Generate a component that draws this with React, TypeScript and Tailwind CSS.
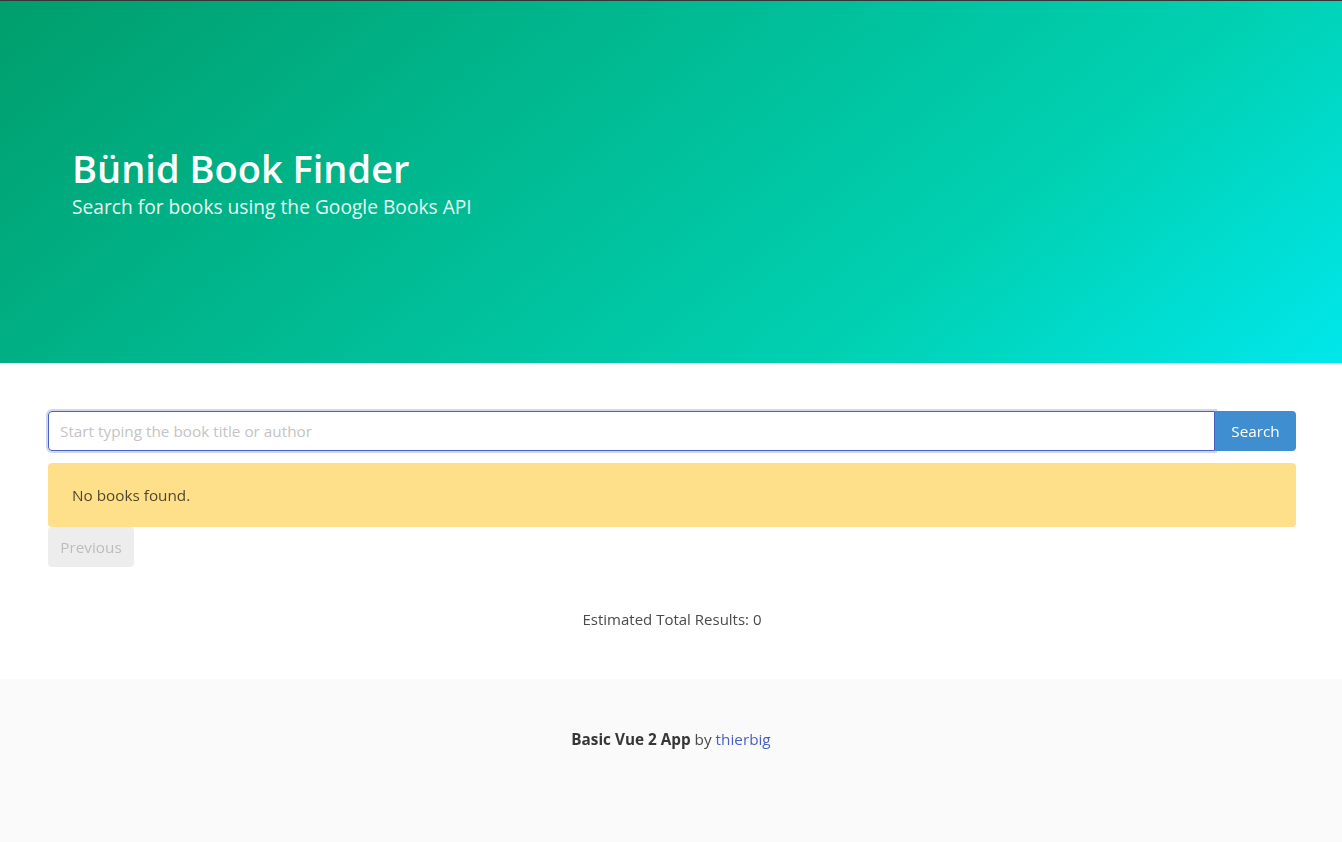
export default function App() {
  return (
    <div className="min-h-screen bg-white text-[#4a4a4a] text-base" style={{ fontFamily: '"Open Sans", "Noto Sans", sans-serif' }}>
      <section className="border-t border-[#363636] bg-[linear-gradient(141deg,#009e6c_0%,#00d1b2_71%,#00e7eb_100%)]">
        <div className="h-[362px] flex items-center px-[72px]">
          <div className="pt-[2px]">
            <h1 className="text-[38px] leading-[42px] font-semibold text-white">Bünid Book Finder</h1>
            <h2 className="mt-[6px] text-[19.2px] leading-6 text-white/90">Search for books using the Google Books API</h2>
          </div>
        </div>
      </section>

      <section className="pl-12 pr-[46px] py-12">
        <div className="flex">
          <input
            autoFocus
            className="flex-1 h-10 px-[11px] rounded-l border border-[#485fc7] shadow-[0_0_0_2px_rgba(72,95,199,0.25)] outline-none placeholder:text-[#c4c4c4] text-[15.3px]"
            placeholder="Start typing the book title or author"
          />
          <button className="h-10 w-[81px] rounded-r bg-[#3e8ed0] text-white text-[15.3px]">Search</button>
        </div>
        <div className="mt-3 rounded bg-[#ffe08a] h-16 pl-6 flex items-center text-[15.3px] text-black/70">No books found.</div>
        <button disabled className="h-10 w-[86px] rounded bg-[#ededed] text-[#bdbdbd] text-[15.3px]">Previous</button>
        <p className="mt-10 text-center text-[15px] leading-6">Estimated Total Results: 0</p>
      </section>

      <footer className="bg-[#fafafa] pt-12 pb-24 text-center text-[15.3px] leading-6">
        <strong className="text-[#363636] font-bold">Basic Vue 2 App</strong> by{" "}
        <a className="text-[#485fc7]" href="#">thierbig</a>
      </footer>
    </div>
  )
}
